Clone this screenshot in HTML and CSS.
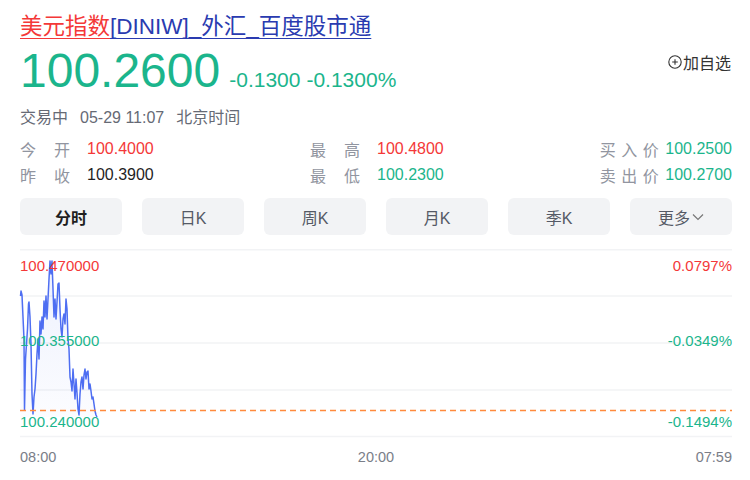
FILE: index.html
```html
<!DOCTYPE html>
<html lang="zh">
<head>
<meta charset="utf-8">
<title>美元指数</title>
<link rel="stylesheet" href="styles.css">
</head>
<body>
<div class="page">
  <h1 class="title"><a class="t-red" href="#">美元指数</a><a class="t-blue" href="#">[DINIW]_外汇_百度股市通</a></h1>
  <div class="price-row">
    <span class="price">100.2600</span>
    <span class="chg">-0.1300</span>
    <span class="chg">-0.1300%</span>
    <span class="add"><svg class="add-ico" viewBox="0 0 14 14" width="14" height="14"><circle cx="7" cy="7" r="6.2" fill="none" stroke="#333" stroke-width="1.1"/><path d="M7 4.2v5.6M4.2 7h5.6" stroke="#333" stroke-width="1.1"/></svg>加自选</span>
  </div>
  <div class="status"><span>交易中</span><span>05-29 11:07</span><span>北京时间</span></div>
  <div class="stats">
    <div class="stat"><span class="lab">今开</span><span class="val red">100.4000</span></div>
    <div class="stat"><span class="lab">最高</span><span class="val red">100.4800</span></div>
    <div class="stat right"><span class="lab3">买入价</span><span class="val green">100.2500</span></div>
    <div class="stat"><span class="lab">昨收</span><span class="val">100.3900</span></div>
    <div class="stat"><span class="lab">最低</span><span class="val green">100.2300</span></div>
    <div class="stat right"><span class="lab3">卖出价</span><span class="val green">100.2700</span></div>
  </div>
  <div class="tabs">
    <div class="tab active">分时</div>
    <div class="tab">日K</div>
    <div class="tab">周K</div>
    <div class="tab">月K</div>
    <div class="tab">季K</div>
    <div class="tab">更多<svg class="caret" viewBox="0 0 12 8" width="12" height="8"><path d="M1 1.5l5 5 5-5" fill="none" stroke="#777" stroke-width="1.2"/></svg></div>
  </div>
  <div class="plot">
    <svg class="plot-svg" viewBox="0 0 712 188" width="712" height="188">
      <defs>
        <linearGradient id="fill" x1="0" y1="0" x2="0" y2="1">
          <stop offset="0" stop-color="#4e6ef2" stop-opacity="0.10"/>
          <stop offset="1" stop-color="#4e6ef2" stop-opacity="0.02"/>
        </linearGradient>
      </defs>
      <g stroke="#f2f3f5" stroke-width="1.5">
        <line x1="0" y1="0.75" x2="712" y2="0.75"/>
        <line x1="0" y1="47" x2="712" y2="47"/>
        <line x1="0" y1="94" x2="712" y2="94"/>
        <line x1="0" y1="141" x2="712" y2="141"/>
        <line x1="0" y1="187.5" x2="712" y2="187.5"/>
      </g>
      <g transform="translate(-20 -250)">
        <polygon fill="url(#fill)" points="20.5,418 20.5,297 21,292 22,296 23,318 24,340 24.5,411 25.5,360 26.5,345 27.5,330 28.5,305 29,303 30,318 31,345 32,395 33,415 34,398 35,390 36,375 37,355 38,340 39,360 40,322 41,335 42,318 43,330 44,302 45,318 46,297 47,320 48,300 49,280 50,262 51,275 52,262 53,290 54,318 55,300 56,320 57,303 58,285 59,284 60,310 61,330 62,338 63,320 64,315 65,325 66,300 67,310 68,340 69,350 70,378 71,383 72,392 73,370 74,385 75,400 76,380 77,394 78,410 79,416 80,395 81,383 82,378 83,390 84,376 85,370 86,380 87,373 88,372 89,390 90,385 91,392 92,400 93,398 94,405 95,412 96,416 97,418"/>
        <polyline fill="none" stroke="#4e6ef2" stroke-width="1.5" stroke-linejoin="round" points="20.5,297 21,292 22,296 23,318 24,340 24.5,411 25.5,360 26.5,345 27.5,330 28.5,305 29,303 30,318 31,345 32,395 33,415 34,398 35,390 36,375 37,355 38,340 39,360 40,322 41,335 42,318 43,330 44,302 45,318 46,297 47,320 48,300 49,280 50,262 51,275 52,262 53,290 54,318 55,300 56,320 57,303 58,285 59,284 60,310 61,330 62,338 63,320 64,315 65,325 66,300 67,310 68,340 69,350 70,378 71,383 72,392 73,370 74,385 75,400 76,380 77,394 78,410 79,416 80,395 81,383 82,378 83,390 84,376 85,370 86,380 87,373 88,372 89,390 90,385 91,392 92,400 93,398 94,405 95,412 96,416 97,418"/>
      </g>
      <line x1="0" y1="161.5" x2="712" y2="161.5" stroke="#ff8a3d" stroke-width="1.5" stroke-dasharray="6 4"/>
    </svg>
    <span class="yl l1 red">100.470000</span>
    <span class="yl l2 green">100.355000</span>
    <span class="yl l3 green">100.240000</span>
    <span class="yr l1 red">0.0797%</span>
    <span class="yr l2 green">-0.0349%</span>
    <span class="yr l3 green">-0.1494%</span>
  </div>
  <div class="axis"><span>08:00</span><span>20:00</span><span>07:59</span></div>
</div>
</body>
</html>
```

FILE: styles.css
```css
* { box-sizing: border-box; }
html, body { margin: 0; padding: 0; background: #fff; }
body {
  font-family: "Liberation Sans", Arial, "Noto Sans CJK SC", sans-serif;
  color: #1f1f1f;
}
.page {
  width: 750px;
  padding: 12px 18px 0 20px;
}
.title {
  margin: 0;
  font-size: 22.5px;
  font-weight: normal;
  line-height: 30px;
  white-space: nowrap;
}
.title a {
  text-decoration: underline;
  text-underline-offset: 4px;
  text-decoration-thickness: 1px;
  text-decoration-skip-ink: none;
}
.t-red { color: #f43838; }
.t-blue { color: #2a3bb0; }

.price-row {
  display: flex;
  align-items: baseline;
  margin-top: 1px;
  height: 56px;
}
.price {
  font-size: 48px;
  line-height: 56px;
  color: #1bb58c;
  margin-right: 9px;
}
.chg {
  font-size: 21px;
  color: #1bb58c;
  margin-right: 6px;
}
.add {
  margin-left: auto;
  align-self: flex-start;
  margin-top: 8px;
  font-size: 16px;
  color: #333;
  display: flex;
  align-items: center;
  font-family: "Noto Sans CJK SC", sans-serif;
  line-height: 22px;
  margin-right: 1px;
}
.add-ico { margin-right: 1px; }

.status {
  margin-top: 8px;
  font-size: 16px;
  color: #666a75;
  line-height: 22px;
  font-family: "Liberation Sans", "Noto Sans CJK SC", sans-serif;
  display: flex;
  gap: 12px;
}

.stats {
  margin-top: 9px;
  display: grid;
  grid-template-columns: 290px 1fr auto;
  row-gap: 4px;
  font-size: 16px;
  line-height: 22px;
}
.stat { display: flex; align-items: center; white-space: nowrap; }
.stat.right { justify-content: flex-end; }
.lab {
  width: 50px;
  color: #9195a0;
  font-family: "Noto Sans CJK SC", sans-serif;
  margin-right: 17px;
  text-align: justify;
  text-align-last: justify;
  display: inline-block;
}
.lab3 {
  color: #9195a0;
  font-family: "Noto Sans CJK SC", sans-serif;
  letter-spacing: 5.5px;
  margin-right: 1px;
}
.val { color: #1f1f1f; }
.red { color: #f43838; }
.green { color: #1bb58c; }

.tabs {
  margin-top: 12px;
  display: grid;
  grid-template-columns: repeat(6, 1fr);
  column-gap: 20px;
}
.tab {
  height: 37px;
  background: #f2f3f5;
  border-radius: 6px;
  display: flex;
  align-items: center;
  justify-content: center;
  font-size: 16px;
  color: #555a66;
  font-family: "Liberation Sans", "Noto Sans CJK SC", sans-serif;
}
.tab.active { color: #1f1f1f; font-weight: bold; }
.caret { margin-left: 2px; margin-top: 1px; }

.plot {
  position: relative;
  margin-top: 14px;
  height: 188px;
}
.plot-svg { display: block; overflow: visible; }
.yl, .yr {
  position: absolute;
  font-size: 15px;
  line-height: 18px;
}
.yl { left: 0; }
.yr { right: 0; }
.l1 { top: 8px; }
.l2 { top: 83px; }
.l3 { top: 164px; }

.axis {
  display: flex;
  justify-content: space-between;
  margin-top: 11px;
  font-size: 14.5px;
  color: #7a7e88;
  line-height: 18px;
}
```
